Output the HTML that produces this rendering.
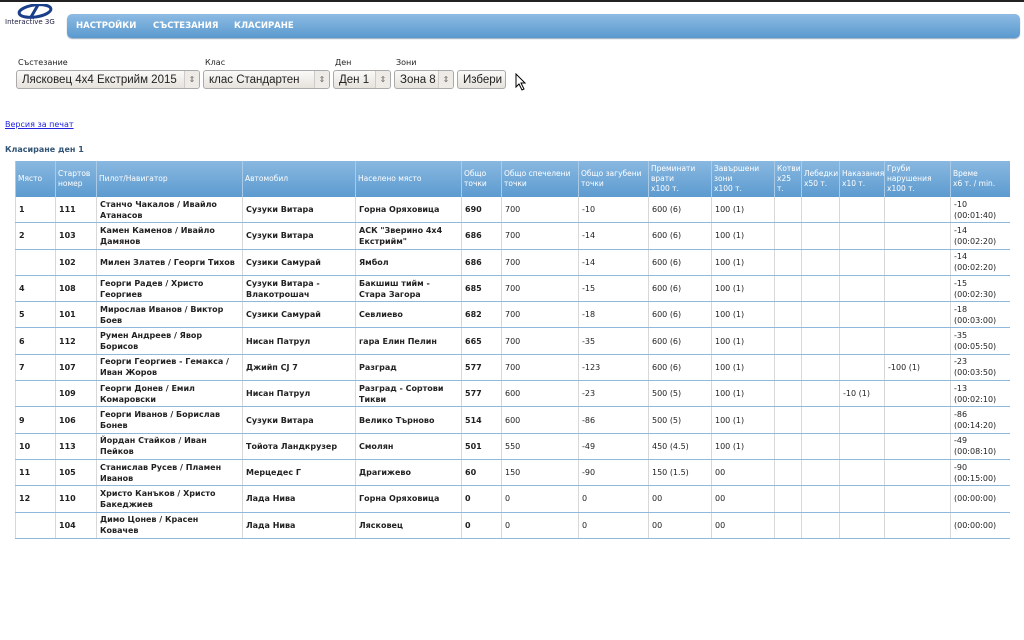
<!DOCTYPE html>
<html><head><meta charset="utf-8"><style>
body{margin:0;width:1024px;height:640px;background:#fff;font-family:"DejaVu Sans","Liberation Sans",sans-serif;position:relative;overflow:hidden}
.top{position:absolute;left:0;top:0;width:1024px;height:2px;background:#222}
.logo{position:absolute;left:5px;top:4px;width:60px}
.logo span{position:absolute;left:0;top:14px;font-size:7px;color:#224;white-space:nowrap}
.nav{position:absolute;left:67px;top:14px;width:953px;height:24px;background:linear-gradient(#8dbbe3,#5a9acf);border-radius:5px;box-shadow:0 1px 1px #9ab}
.nav a{position:absolute;top:7px;color:#fff;font-weight:bold;font-size:8.5px;text-decoration:none}
.lbl{position:absolute;top:58px;font-size:8px;color:#222}
.sel{position:absolute;top:70px;height:19px;border:1px solid #aaa;border-radius:3px;background:linear-gradient(#fbfaf8,#e6e2dc);font-family:"Liberation Sans",sans-serif;font-size:11.5px;line-height:18px;padding-left:5px;box-sizing:border-box;color:#222;white-space:nowrap;overflow:hidden}
.sel i{position:absolute;right:0;top:0;width:14px;text-align:center;font-style:normal;font-size:8px;color:#666;border-left:1px solid #ccc;background:#eeebe6}
.link{position:absolute;left:5px;top:120px;font-size:8px;color:#2222dd;text-decoration:underline}
.h{position:absolute;left:5px;top:145px;font-size:8px;font-weight:bold;color:#335577}
table{position:absolute;left:15px;top:161px;width:994px;border-collapse:collapse;table-layout:fixed;font-size:8px}
th{background:linear-gradient(#89b8e0,#5c9bd0);color:#fff;font-weight:normal;text-align:left;vertical-align:middle;height:36px;padding:0 2px;border-left:1px solid #a9cbe8;font-size:7.5px;line-height:10px}
td{height:25.3px;border-bottom:1px solid #8fb8dc;border-left:1px solid #d8d8d8;padding:0 3px;line-height:11px;color:#222;font-size:8px}
td.b{font-weight:bold}
</style></head><body>
<div class="top"></div>
<div class="logo"><svg width="60" height="16" viewBox="0 0 60 16"><ellipse cx="30" cy="7" rx="16" ry="6" fill="none" stroke="#1a3f8a" stroke-width="3" transform="rotate(-8 30 7)"/><path d="M26 13 L33 1" stroke="#1a3f8a" stroke-width="3"/></svg><span>Interactive 3G</span></div>
<div class="nav"><a style="left:9px">НАСТРОЙКИ</a><a style="left:86px">СЪСТЕЗАНИЯ</a><a style="left:167px">КЛАСИРАНЕ</a></div>
<div class="lbl" style="left:18px">Състезание</div>
<div class="lbl" style="left:205px">Клас</div>
<div class="lbl" style="left:335px">Ден</div>
<div class="lbl" style="left:396px">Зони</div>
<div class="sel" style="left:16px;width:184px">Лясковец 4x4 Екстрийм 2015<i>⇕</i></div>
<div class="sel" style="left:203px;width:127px">клас Стандартен<i>⇕</i></div>
<div class="sel" style="left:333px;width:58px">Ден 1<i>⇕</i></div>
<div class="sel" style="left:394px;width:60px">Зона 8<i>⇕</i></div>
<div class="sel" style="left:457px;width:49px">Избери</div>
<svg style="position:absolute;left:515px;top:73px" width="12" height="18"><path d="M1 1 L1 14 L4 11 L7 17 L9 16 L6 10 L10 10 Z" fill="#fff" stroke="#000"/></svg>
<div class="link">Версия за печат</div>
<div class="h">Класиране ден 1</div>
<table>
<colgroup><col style="width:40px"><col style="width:41px"><col style="width:146px"><col style="width:113px"><col style="width:106px"><col style="width:40px"><col style="width:77px"><col style="width:70px"><col style="width:63px"><col style="width:63px"><col style="width:27px"><col style="width:38px"><col style="width:45px"><col style="width:66px"><col style="width:59px"></colgroup>
<tr><th>Място</th><th>Стартов номер</th><th>Пилот/Навигатор</th><th>Автомобил</th><th>Населено място</th><th>Общо точки</th><th>Общо спечелени точки</th><th>Общо загубени точки</th><th>Преминати врати<br>x100 т.</th><th>Завършени зони<br>x100 т.</th><th>Котви x25 т.</th><th>Лебедки x50 т.</th><th>Наказания x10 т.</th><th>Груби нарушения x100 т.</th><th>Време<br>x6 т. / min.</th></tr>
<tr><td class="b">1</td><td class="b">111</td><td class="b">Станчо Чакалов / Ивайло Атанасов</td><td class="b">Сузуки Витара</td><td class="b">Горна Оряховица</td><td class="b">690</td><td>700</td><td>-10</td><td>600 (6)</td><td>100 (1)</td><td></td><td></td><td></td><td></td><td>-10<br>(00:01:40)</td></tr>
<tr><td class="b">2</td><td class="b">103</td><td class="b">Камен Каменов / Ивайло Дамянов</td><td class="b">Сузуки Витара</td><td class="b">АСК "Зверино 4x4 Екстрийм"</td><td class="b">686</td><td>700</td><td>-14</td><td>600 (6)</td><td>100 (1)</td><td></td><td></td><td></td><td></td><td>-14<br>(00:02:20)</td></tr>
<tr><td></td><td class="b">102</td><td class="b">Милен Златев / Георги Тихов</td><td class="b">Сузики Самурай</td><td class="b">Ямбол</td><td class="b">686</td><td>700</td><td>-14</td><td>600 (6)</td><td>100 (1)</td><td></td><td></td><td></td><td></td><td>-14<br>(00:02:20)</td></tr>
<tr><td class="b">4</td><td class="b">108</td><td class="b">Георги Радев / Христо Георгиев</td><td class="b">Сузуки Витара - Влакотрошач</td><td class="b">Бакшиш тийм - Стара Загора</td><td class="b">685</td><td>700</td><td>-15</td><td>600 (6)</td><td>100 (1)</td><td></td><td></td><td></td><td></td><td>-15<br>(00:02:30)</td></tr>
<tr><td class="b">5</td><td class="b">101</td><td class="b">Мирослав Иванов / Виктор Боев</td><td class="b">Сузики Самурай</td><td class="b">Севлиево</td><td class="b">682</td><td>700</td><td>-18</td><td>600 (6)</td><td>100 (1)</td><td></td><td></td><td></td><td></td><td>-18<br>(00:03:00)</td></tr>
<tr><td class="b">6</td><td class="b">112</td><td class="b">Румен Андреев / Явор Борисов</td><td class="b">Нисан Патрул</td><td class="b">гара Елин Пелин</td><td class="b">665</td><td>700</td><td>-35</td><td>600 (6)</td><td>100 (1)</td><td></td><td></td><td></td><td></td><td>-35<br>(00:05:50)</td></tr>
<tr><td class="b">7</td><td class="b">107</td><td class="b">Георги Георгиев - Гемакса / Иван Жоров</td><td class="b">Джийп CJ 7</td><td class="b">Разград</td><td class="b">577</td><td>700</td><td>-123</td><td>600 (6)</td><td>100 (1)</td><td></td><td></td><td></td><td>-100 (1)</td><td>-23<br>(00:03:50)</td></tr>
<tr><td></td><td class="b">109</td><td class="b">Георги Донев / Емил Комаровски</td><td class="b">Нисан Патрул</td><td class="b">Разград - Сортови Тикви</td><td class="b">577</td><td>600</td><td>-23</td><td>500 (5)</td><td>100 (1)</td><td></td><td></td><td>-10 (1)</td><td></td><td>-13<br>(00:02:10)</td></tr>
<tr><td class="b">9</td><td class="b">106</td><td class="b">Георги Иванов / Борислав Бонев</td><td class="b">Сузуки Витара</td><td class="b">Велико Търново</td><td class="b">514</td><td>600</td><td>-86</td><td>500 (5)</td><td>100 (1)</td><td></td><td></td><td></td><td></td><td>-86<br>(00:14:20)</td></tr>
<tr><td class="b">10</td><td class="b">113</td><td class="b">Йордан Стайков / Иван Пейков</td><td class="b">Тойота Ландкрузер</td><td class="b">Смолян</td><td class="b">501</td><td>550</td><td>-49</td><td>450 (4.5)</td><td>100 (1)</td><td></td><td></td><td></td><td></td><td>-49<br>(00:08:10)</td></tr>
<tr><td class="b">11</td><td class="b">105</td><td class="b">Станислав Русев / Пламен Иванов</td><td class="b">Мерцедес Г</td><td class="b">Драгижево</td><td class="b">60</td><td>150</td><td>-90</td><td>150 (1.5)</td><td>00</td><td></td><td></td><td></td><td></td><td>-90<br>(00:15:00)</td></tr>
<tr><td class="b">12</td><td class="b">110</td><td class="b">Христо Канъков / Христо Бакеджиев</td><td class="b">Лада Нива</td><td class="b">Горна Оряховица</td><td class="b">0</td><td>0</td><td>0</td><td>00</td><td>00</td><td></td><td></td><td></td><td></td><td>(00:00:00)</td></tr>
<tr><td></td><td class="b">104</td><td class="b">Димо Цонев / Красен Ковачев</td><td class="b">Лада Нива</td><td class="b">Лясковец</td><td class="b">0</td><td>0</td><td>0</td><td>00</td><td>00</td><td></td><td></td><td></td><td></td><td>(00:00:00)</td></tr>
</table>
</body></html>
